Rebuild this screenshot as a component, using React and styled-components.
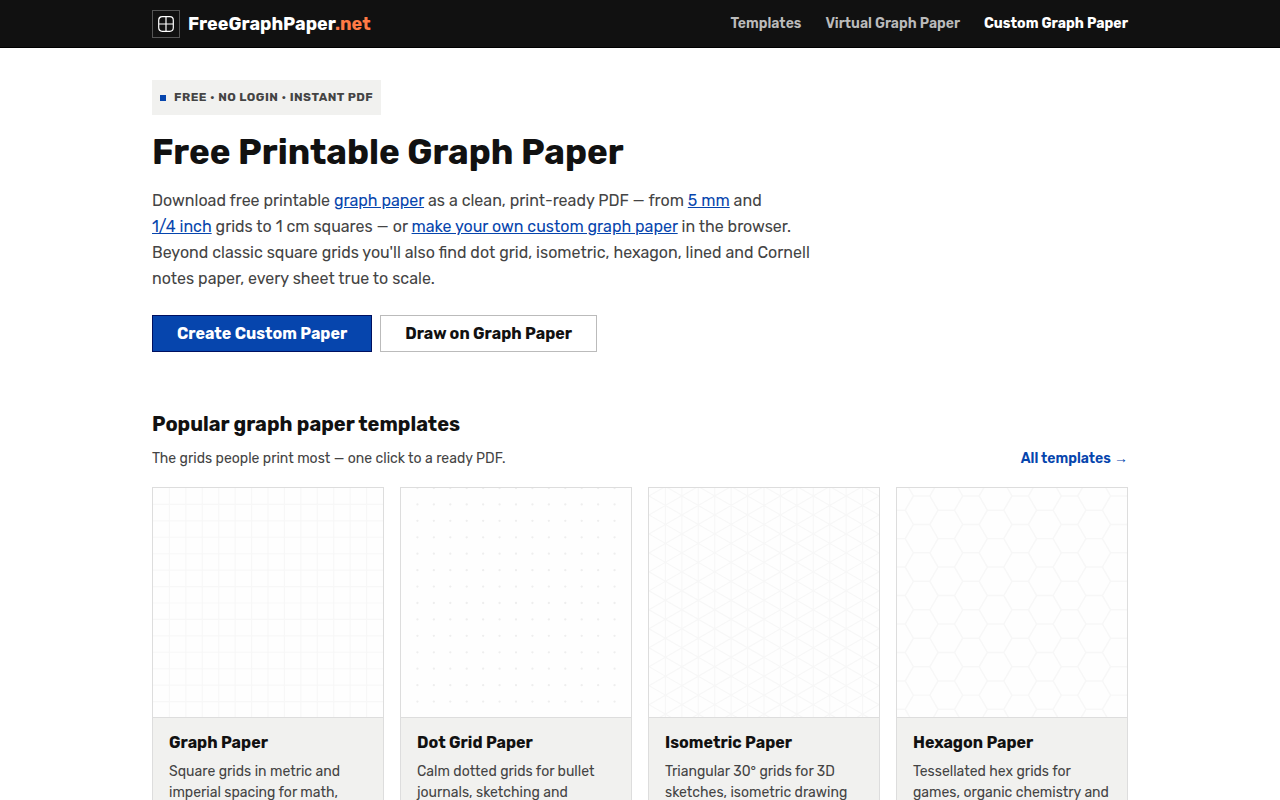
import React from "react";
import styled, { createGlobalStyle } from "styled-components";

const GlobalStyle = createGlobalStyle`
  *, *::before, *::after { box-sizing: border-box; }
  body {
    margin: 0;
    background: #fff;
    color: #444;
    font-family: Rubik, Roboto, "Liberation Sans", sans-serif;
    font-size: 16px;
    line-height: 26px;
  }
  h1, h2, h3, p { margin: 0; color: #111; }
`;

const Container = styled.div`
  width: 100%;
  max-width: 1024px;
  margin: 0 auto;
  padding: 0 24px;
`;

const Header = styled.header`
  background: #111;
  border-bottom: 1px solid #000;
`;

const Bar = styled(Container)`
  display: flex;
  align-items: center;
  justify-content: space-between;
  height: 47px;
`;

const Brand = styled.a`
  display: flex;
  align-items: center;
  gap: 8px;
  color: #fff;
  font-size: 18px;
  font-weight: 700;
  text-decoration: none;
`;

const BrandMark = styled.span`
  display: grid;
  place-items: center;
  width: 28px;
  height: 28px;
  border: 1px solid #555;
`;

const Accent = styled.span`
  color: #ff7a45;
`;

const Nav = styled.nav`
  display: flex;
  gap: 24px;
`;

const NavLink = styled.a`
  color: ${(p) => (p.$active ? "#fff" : "#bbb")};
  font-size: 14px;
  line-height: 21px;
  font-weight: ${(p) => (p.$active ? 700 : 600)};
  text-decoration: none;
`;

const Hero = styled.section`
  display: flex;
  flex-direction: column;
  align-items: flex-start;
  padding: 32px 0 56px;
`;

const Badge = styled.p`
  display: flex;
  align-items: center;
  gap: 8px;
  height: 35px;
  padding: 0 8px;
  background: #f1f1ef;
  color: #444;
  font-size: 12px;
  line-height: 19px;
  font-weight: 700;
  text-transform: uppercase;
  letter-spacing: 0.04em;

  &::before {
    content: "";
    width: 6px;
    height: 6px;
    background: #0645ad;
  }
`;

const Title = styled.h1`
  margin-top: 16px;
  font-size: 35px;
  line-height: 42px;
  font-weight: 700;
`;

const Lead = styled.p`
  max-width: 672px;
  margin: 15px 0 23px;
  color: #444;
  line-height: 26px;

  a { color: #0645ad; }
`;

const Actions = styled.div`
  display: flex;
  flex-wrap: wrap;
  gap: 8px;
`;

const Button = styled.button`
  height: 37px;
  padding: 0 24px;
  border: 1px solid ${(p) => (p.$primary ? "#001060" : "#bbb")};
  background: ${(p) => (p.$primary ? "#0645ad" : "#fff")};
  color: ${(p) => (p.$primary ? "#fff" : "#111")};
  font: 700 16px/24px Rubik, Roboto, "Liberation Sans", sans-serif;
  cursor: pointer;
`;

const SectionTitle = styled.h2`
  font-size: 20px;
  line-height: 32px;
  font-weight: 700;
`;

const SectionHead = styled.div`
  display: flex;
  justify-content: space-between;
  align-items: center;
  margin: 8px 0 18px;
  font-size: 14px;
  line-height: 21px;
`;

const SectionNote = styled.p`
  color: #444;
`;

const MoreLink = styled.a`
  color: #0645ad;
  font-weight: 600;
  text-decoration: none;
`;

const Cards = styled.div`
  display: grid;
  grid-template-columns: repeat(4, 1fr);
  gap: 16px;
  padding-bottom: 48px;
`;

const Card = styled.article`
  display: flex;
  flex-direction: column;
  border: 1px solid #ddd;
  background: #f1f1ef;
`;

const Preview = styled.div`
  aspect-ratio: 1;
  border-bottom: 1px solid #ddd;
  background: #fefefe;
  overflow: hidden;

  svg { display: block; width: 100%; height: auto; }
`;

const CardBody = styled.div`
  padding: 12px 16px 16px;
`;

const CardTitle = styled.h3`
  font-size: 16px;
  line-height: 26px;
  font-weight: 700;
`;

const CardText = styled.p`
  margin-top: 5px;
  color: #444;
  font-size: 14px;
  line-height: 21px;
`;

const range = (n, from = 0) => Array.from({ length: n }, (_, i) => i + from);

const squares = range(13, 1).map((i) => `M${i * 10} 0V140M0 ${i * 10}H140`).join("");

const STEP = 11.547;
const verticals = range(13, 1).map((i) => `M${i * 10} 0V140`).join("");
const diagonals = range(28, -8)
  .map((k) => {
    const y = 4.85 + k * STEP;
    return `M0 ${y}L140 ${y + 80.83}M0 ${y}L140 ${y - 80.83}`;
  })
  .join("");

const hexagons = range(11)
  .flatMap((c) =>
    range(10, -1).map((r) => {
      const x = c * 15;
      const y = (c % 2 ? 13.5 : 4.84) + r * 17.32;
      return `M${x - 5} ${y - 8.66}h10l5 8.66l-5 8.66h-10`;
    })
  )
  .join("");

function Pattern({ kind }) {
  return (
    <svg viewBox="0 0 140 140" fill="none" stroke="#f7f7f7" strokeWidth="0.7" aria-hidden="true">
      {kind === "square" && <path d={squares} />}
      {kind === "iso" && <path d={verticals + diagonals} />}
      {kind === "hex" && <path d={hexagons} strokeWidth="0.9" />}
      {kind === "dot" &&
        range(14).flatMap((r) =>
          range(13, 1).map((c) => (
            <circle key={`${r}-${c}`} cx={c * 10} cy={r * 10} r="0.7" fill="#eee" stroke="none" />
          ))
        )}
    </svg>
  );
}

const templates = [
  { kind: "square", title: "Graph Paper", text: "Square grids in metric and imperial spacing for math," },
  { kind: "dot", title: "Dot Grid Paper", text: "Calm dotted grids for bullet journals, sketching and" },
  { kind: "iso", title: "Isometric Paper", text: "Triangular 30° grids for 3D sketches, isometric drawing" },
  { kind: "hex", title: "Hexagon Paper", text: "Tessellated hex grids for games, organic chemistry and" },
];

export default function App() {
  return (
    <>
      <GlobalStyle />
      <Header>
        <Bar>
          <Brand href="#">
            <BrandMark>
              <svg width="16" height="16" viewBox="0 0 16 16" fill="none" stroke="#fff" aria-hidden="true">
                <rect x="0.7" y="0.7" width="14.6" height="14.6" rx="3.5" strokeWidth="1.2" />
                <path d="M8 1v14M1 8h14" strokeWidth="1.2" />
              </svg>
            </BrandMark>
            <span>FreeGraphPaper<Accent>.net</Accent></span>
          </Brand>
          <Nav>
            <NavLink href="#templates">Templates</NavLink>
            <NavLink href="#virtual">Virtual Graph Paper</NavLink>
            <NavLink href="#custom" $active>Custom Graph Paper</NavLink>
          </Nav>
        </Bar>
      </Header>
      <Container as="main">
        <Hero>
          <Badge>Free • No login • Instant PDF</Badge>
          <Title>Free Printable Graph Paper</Title>
          <Lead>
            Download free printable <a href="#graph">graph paper</a> as a clean, print-ready PDF — from{" "}
            <a href="#5mm">5&nbsp;mm</a> and <a href="#quarter">1/4&nbsp;inch</a> grids to 1&nbsp;cm squares — or{" "}
            <a href="#custom">make your own custom graph paper</a> in the browser. Beyond classic square grids
            you'll also find dot grid, isometric, hexagon, lined and Cornell notes paper, every sheet true to scale.
          </Lead>
          <Actions>
            <Button type="button" $primary>Create Custom Paper</Button>
            <Button type="button">Draw on Graph Paper</Button>
          </Actions>
        </Hero>
        <section id="templates">
          <SectionTitle>Popular graph paper templates</SectionTitle>
          <SectionHead>
            <SectionNote>The grids people print most — one click to a ready PDF.</SectionNote>
            <MoreLink href="#all">All templates →</MoreLink>
          </SectionHead>
          <Cards>
            {templates.map((t) => (
              <Card key={t.kind}>
                <Preview><Pattern kind={t.kind} /></Preview>
                <CardBody>
                  <CardTitle>{t.title}</CardTitle>
                  <CardText>{t.text}</CardText>
                </CardBody>
              </Card>
            ))}
          </Cards>
        </section>
      </Container>
    </>
  );
}
